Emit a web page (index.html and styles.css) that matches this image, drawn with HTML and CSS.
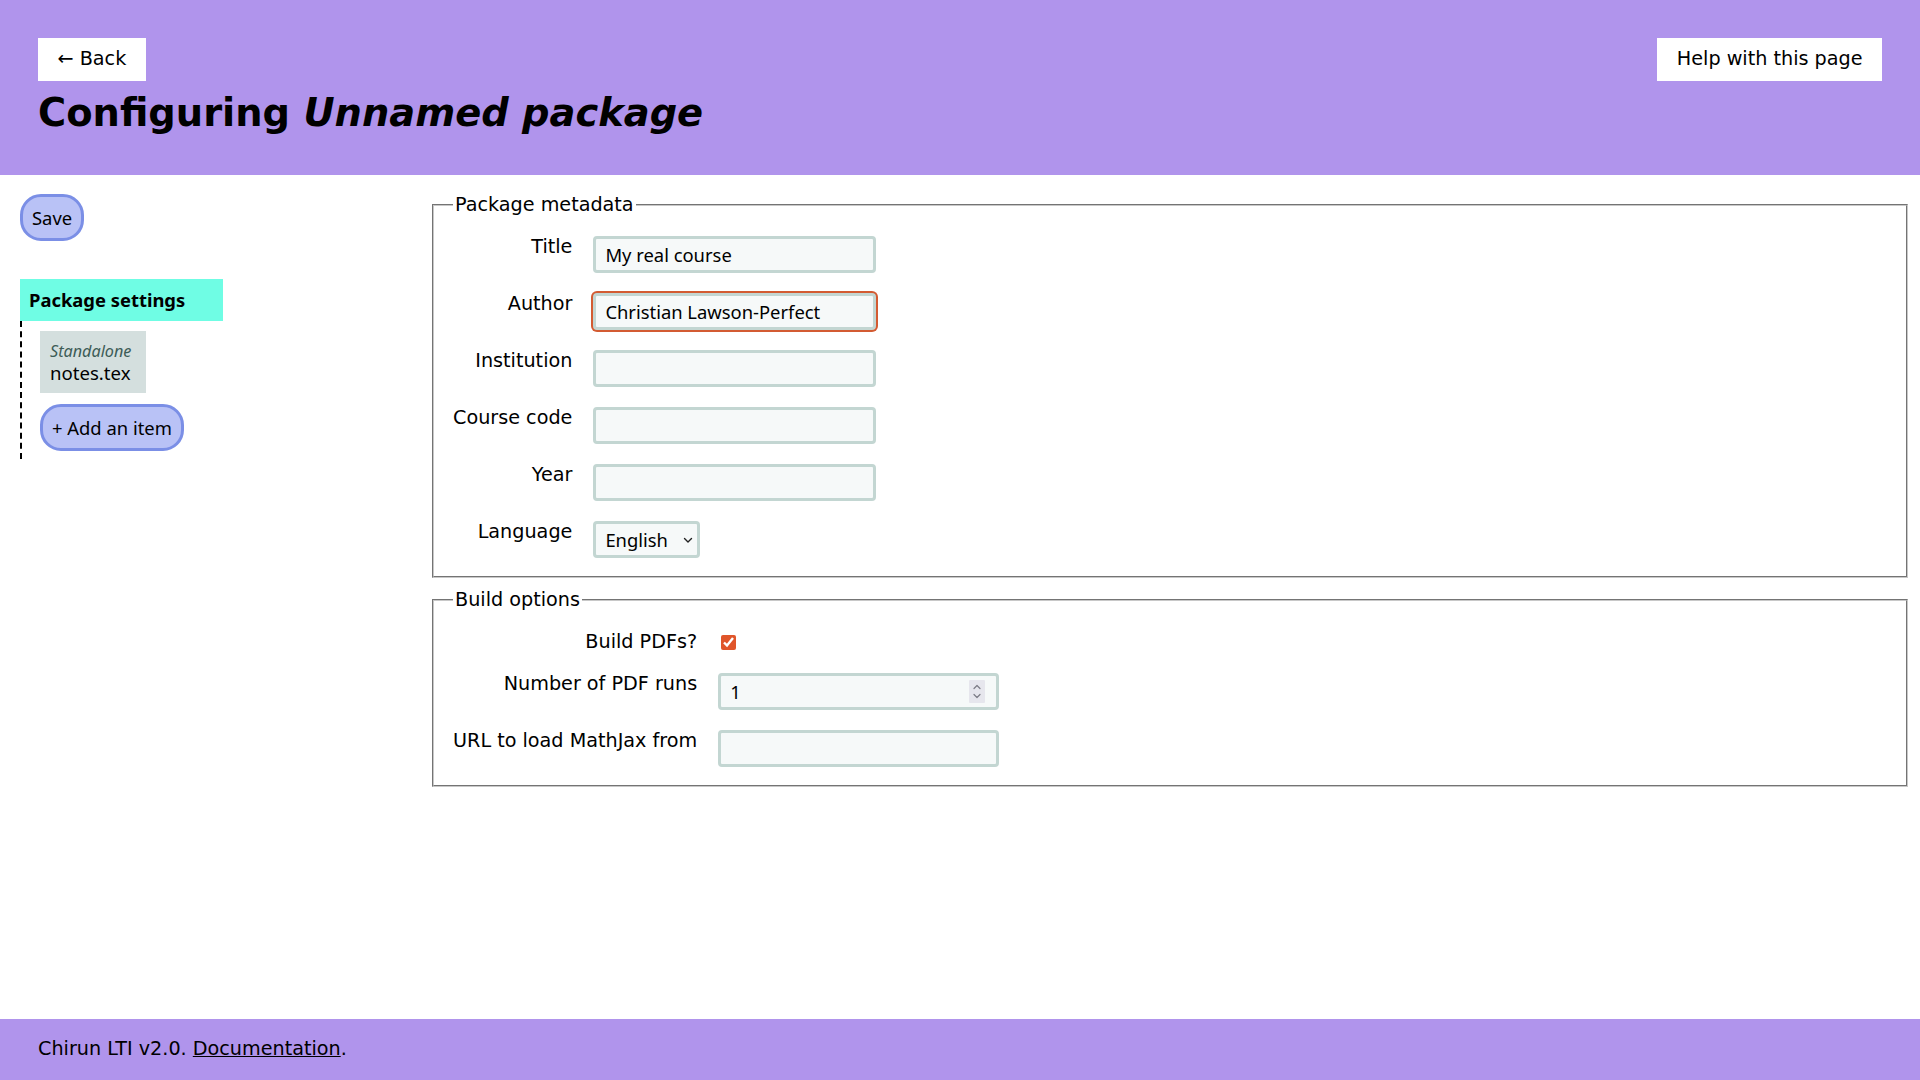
FILE: index.html
```html
<!DOCTYPE html>
<html lang="en">
<head>
<meta charset="utf-8">
<title>Configuring Unnamed package</title>
<link rel="stylesheet" href="styles.css">
</head>
<body>
<header class="site-header">
  <div class="header-bar">
    <a class="header-button" href="#">← Back</a>
    <a class="header-button" href="#">Help with this page</a>
  </div>
  <h1 class="page-title">Configuring <em>Unnamed package</em></h1>
</header>

<main class="layout">
  <nav class="sidebar">
    <button class="pill-button save-button" type="button">Save</button>
    <div class="nav-current">Package settings</div>
    <ul class="item-list">
      <li class="item">
        <span class="item-type">Standalone</span>
        <span class="item-name">notes.tex</span>
      </li>
      <li class="item-add">
        <button class="pill-button" type="button">+ Add an item</button>
      </li>
    </ul>
  </nav>

  <form class="settings">
    <fieldset class="group group-meta">
      <legend class="group-title">Package metadata</legend>
      <div class="fields">
        <label class="field-label" for="title">Title</label>
        <input class="text-input" id="title" type="text" value="My real course">
        <label class="field-label" for="author">Author</label>
        <input class="text-input is-focused" id="author" type="text" value="Christian Lawson-Perfect">
        <label class="field-label" for="institution">Institution</label>
        <input class="text-input" id="institution" type="text">
        <label class="field-label" for="code">Course code</label>
        <input class="text-input" id="code" type="text">
        <label class="field-label" for="year">Year</label>
        <input class="text-input" id="year" type="text">
        <label class="field-label" for="language">Language</label>
        <span class="control-wrap">
          <select class="select-input" id="language">
            <option>English</option>
          </select>
          <svg class="select-arrow" width="10" height="7" viewBox="0 0 10 7" aria-hidden="true">
            <path d="M1.5 1.5 L5 5 L8.5 1.5" fill="none" stroke="#222" stroke-width="1.4" stroke-linecap="round" stroke-linejoin="round"/>
          </svg>
        </span>
      </div>
    </fieldset>

    <fieldset class="group">
      <legend class="group-title">Build options</legend>
      <div class="fields">
        <label class="field-label" for="pdfs">Build PDFs?</label>
        <input class="checkbox" id="pdfs" type="checkbox" checked>
        <label class="field-label" for="runs">Number of PDF runs</label>
        <span class="control-wrap">
          <input class="text-input wide" id="runs" type="number" value="1">
          <svg class="spinner" width="16" height="23" viewBox="0 0 16 23" aria-hidden="true">
            <rect x="0" y="0" width="16" height="23" rx="1" fill="#e6e6ed"/>
            <path d="M5 8.5 L8 5.5 L11 8.5" fill="none" stroke="#7c7c86" stroke-width="1.2" stroke-linecap="round" stroke-linejoin="round"/>
            <path d="M5 14.5 L8 17.5 L11 14.5" fill="none" stroke="#7c7c86" stroke-width="1.2" stroke-linecap="round" stroke-linejoin="round"/>
          </svg>
        </span>
        <label class="field-label" for="mathjax">URL to load MathJax from</label>
        <input class="text-input wide" id="mathjax" type="text">
      </div>
    </fieldset>
  </form>
</main>

<footer class="site-footer">
  Chirun LTI v2.0. <a class="footer-link" href="#">Documentation</a>.
</footer>
</body>
</html>
```

FILE: styles.css
```css
html, body {
  margin: 0;
  padding: 0;
}

body {
  font-family: "DejaVu Sans", sans-serif;
  font-size: 19.2px;
  color: #000;
  background: #fff;
  min-height: 100vh;
  display: flex;
  flex-direction: column;
}

.site-header {
  background: #b094ec;
  padding: 38px 38px 39px 38px;
}

.header-bar {
  display: flex;
  justify-content: space-between;
  align-items: flex-start;
}

.header-button {
  display: inline-block;
  background: #fff;
  color: #000;
  text-decoration: none;
  padding: 10.3px 19.5px;
  line-height: 22.4px;
}

.page-title {
  margin: 10px 0 0 0;
  font-size: 38.4px;
  font-weight: bold;
  line-height: 44.7px;
}

.page-title em {
  font-style: italic;
}

.layout {
  display: grid;
  grid-template-columns: 392px 1fr;
  column-gap: 20px;
  padding: 19.5px 12px 20px 20px;
}

.sidebar {
  padding-top: 0;
  display: flex;
  flex-direction: column;
  align-items: flex-start;
}

.pill-button {
  font-family: "Noto Sans", sans-serif;
  font-size: 18.4px;
  line-height: 25px;
  color: #000;
  background: #b9c2f6;
  border: 3px solid #7b8fe6;
  border-radius: 21px;
  padding: 8px 9px;
  cursor: pointer;
}

.save-button {
  margin-bottom: 38px;
}

.nav-current {
  font-family: "Noto Sans", sans-serif;
  font-weight: bold;
  font-size: 18.4px;
  line-height: 24px;
  background: #6ffde4;
  width: 194px;
  padding: 9px 0 9px 9px;
}

.item-list {
  list-style: none;
  margin: 0;
  padding: 10px 0 8px 18px;
  border-left: 2px dashed #000;
  display: flex;
  flex-direction: column;
  align-items: flex-start;
  gap: 11px;
}

.item {
  background: #d4dfde;
  padding: 10px 8px 9px 10px;
  display: flex;
  flex-direction: column;
  font-family: "Noto Sans", sans-serif;
  width: 88px;
}

.item-type {
  font-style: italic;
  font-size: 16.2px;
  line-height: 20px;
  color: #3d5c57;
}

.item-name {
  font-size: 18.6px;
  line-height: 23px;
  color: #000;
}

.settings {
  display: flex;
  flex-direction: column;
  gap: 11px;
}

.group {
  margin: 0;
  padding: 20px 19px 18px 19px;
  border: 2px groove #c8c8c8;
}

.group-meta {
  padding-top: 19px;
}

.group-title {
  padding: 0 2px;
  line-height: 22.4px;
  margin-left: 0;
}

.fields {
  display: grid;
  grid-template-columns: max-content max-content;
  column-gap: 21px;
  row-gap: 20px;
  align-items: start;
}

.field-label {
  text-align: right;
  line-height: 22.4px;
}

.control-wrap {
  position: relative;
  display: inline-block;
  justify-self: start;
}

.text-input,
.select-input {
  box-sizing: border-box;
  display: block;
  width: 283px;
  height: 37px;
  font-family: "Noto Sans", sans-serif;
  font-size: 18.4px;
  color: #000;
  background: #f6f9f9;
  border: 3px solid #c3d6d2;
  border-radius: 4px;
  padding: 0 9px;
  margin: 0;
  outline: none;
}

.text-input.wide {
  width: 281px;
}

.text-input[type="number"] {
  -moz-appearance: textfield;
}

.text-input[type="number"]::-webkit-inner-spin-button,
.text-input[type="number"]::-webkit-outer-spin-button {
  -webkit-appearance: none;
  margin: 0;
}

.spinner {
  position: absolute;
  right: 14px;
  top: 7px;
}

.is-focused {
  box-shadow: 0 0 0 2px #d35b32;
}

.select-input {
  width: 107px;
  padding: 0 22px 0 9px;
  -webkit-appearance: none;
  appearance: none;
}

.select-arrow {
  position: absolute;
  right: 7px;
  top: 16px;
  pointer-events: none;
}

.checkbox {
  width: 15px;
  height: 15px;
  margin: 4px 0 0 3px;
  accent-color: #e0552a;
}

.site-footer {
  margin-top: auto;
  background: #b094ec;
  padding: 19px 38px 20px 38px;
  font-size: 19.2px;
  line-height: 22px;
}

.footer-link {
  color: #000;
  text-decoration: underline;
}
```
